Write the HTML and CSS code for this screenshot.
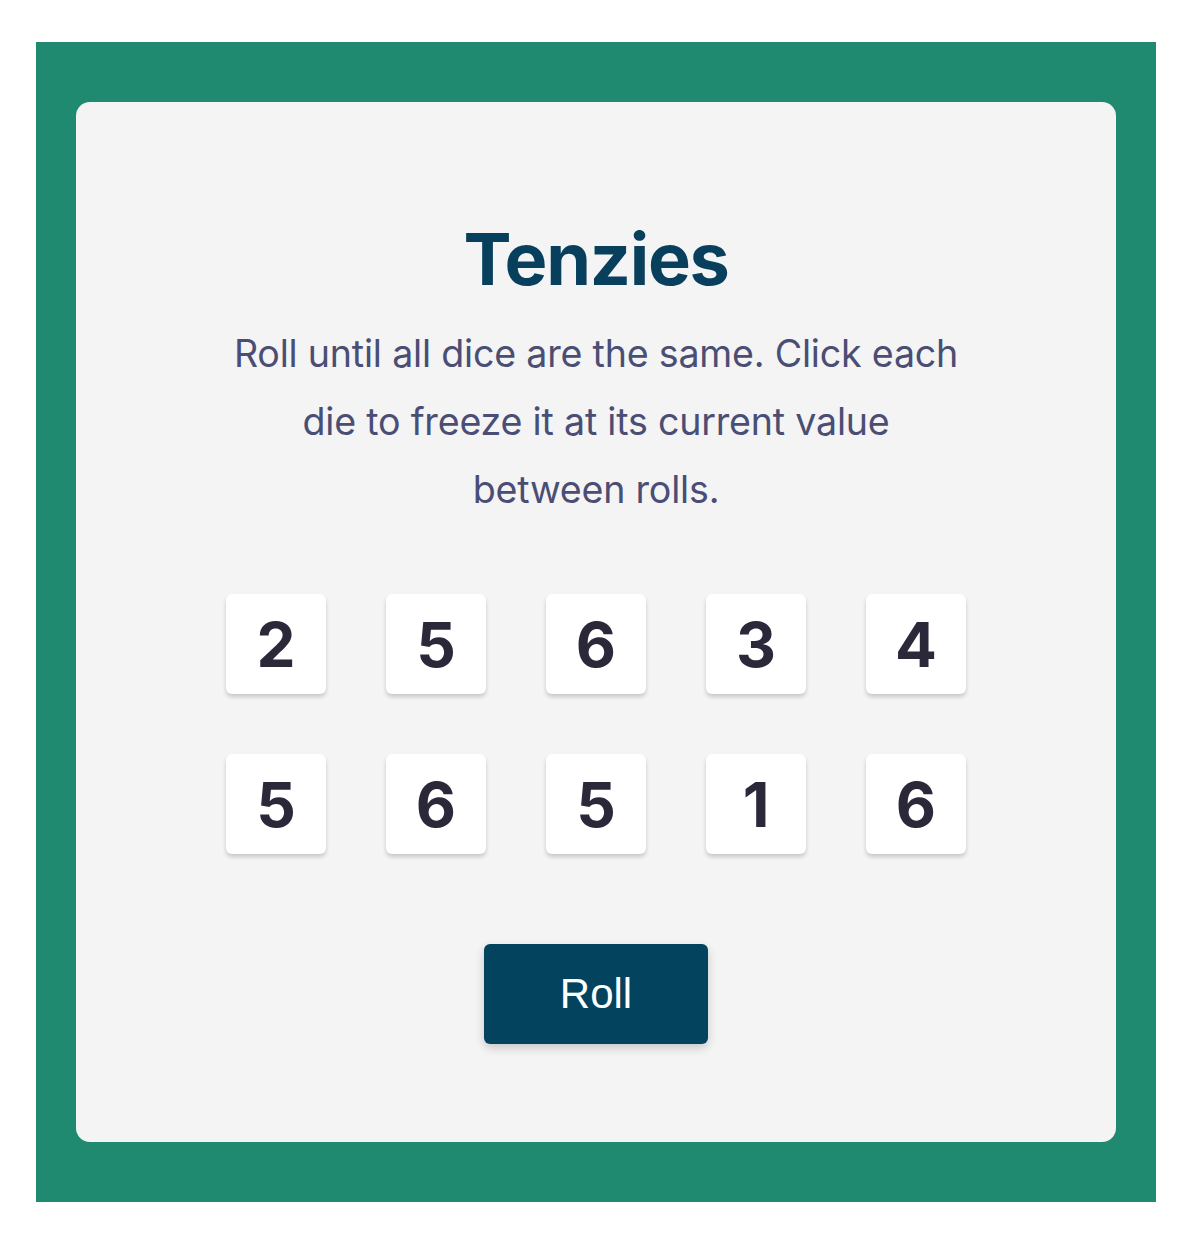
FILE: index.html
```html
<!DOCTYPE html>
<html lang="en">
<head>
<meta charset="utf-8">
<title>Tenzies</title>
<link rel="stylesheet" href="styles.css">
</head>
<body>
<main class="frame">
  <section class="board">
    <h1 class="title">Tenzies</h1>
    <p class="instructions">Roll until all dice are the same. Click each die to freeze it at its current value between rolls.</p>
    <div class="dice">
      <button class="die">2</button>
      <button class="die">5</button>
      <button class="die">6</button>
      <button class="die">3</button>
      <button class="die">4</button>
      <button class="die">5</button>
      <button class="die">6</button>
      <button class="die">5</button>
      <button class="die">1</button>
      <button class="die">6</button>
    </div>
    <button class="roll">Roll</button>
  </section>
</main>
</body>
</html>
```
FILE: styles.css
```css
* { box-sizing: border-box; }
html, body { margin: 0; background: #ffffff; }
body {
  padding: 42px 36px 34px;
  font-family: "Inter", "Liberation Sans", sans-serif;
}
.frame {
  width: 1120px;
  height: 1160px;
  background: #1f8a70;
  padding: 60px 40px;
}
.board {
  height: 1040px;
  background: #f4f4f4;
  border-radius: 14px;
  display: flex;
  flex-direction: column;
  align-items: center;
  padding-top: 121px;
}
.title {
  margin: 0;
  font-size: 72px;
  line-height: 72px;
  font-weight: 700;
  color: #073f5c;
  letter-spacing: -1.3px;
}
.instructions {
  margin: 25px 0 0;
  max-width: 732px;
  text-align: center;
  font-size: 37.6px;
  line-height: 68px;
  font-weight: 400;
  color: #4a4e74;
  letter-spacing: -0.2px;
}
.dice {
  margin-top: 70px;
  display: grid;
  grid-template-columns: repeat(5, 100px);
  gap: 60px;
}
.die {
  width: 100px;
  height: 100px;
  border: none;
  border-radius: 6px;
  background: #ffffff;
  box-shadow: 0 3px 4px rgba(0, 0, 0, 0.18);
  font-family: "Inter", "Liberation Sans", sans-serif;
  font-size: 62px;
  font-weight: 700;
  color: #2b283a;
  padding: 0;
}
.roll {
  margin-top: 90px;
  width: 224px;
  height: 100px;
  border: none;
  border-radius: 6px;
  background: #03435e;
  color: #ffffff;
  font-family: "Liberation Sans", Arial, sans-serif;
  font-size: 42px;
  box-shadow: 0 4px 10px rgba(0, 0, 0, 0.18);
}
```
